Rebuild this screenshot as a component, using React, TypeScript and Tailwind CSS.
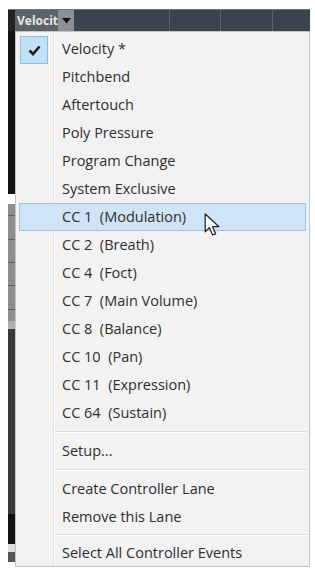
const items = [
   'Velocity *',
   'Pitchbend',
   'Aftertouch',
   'Poly Pressure',
   'Program Change',
   'System Exclusive',
   'CC 1  (Modulation)',
   'CC 2  (Breath)',
   'CC 4  (Foct)',
   'CC 7  (Main Volume)',
   'CC 8  (Balance)',
   'CC 10  (Pan)',
   'CC 11  (Expression)',
   'CC 64  (Sustain)',
]

const Separator = ({ tall }: { tall?: boolean }) => (
   <div className={tall ? 'flex h-[10px] items-center pl-[38px] pr-[2px]' : 'flex h-[8px] items-center pl-[38px] pr-[2px]'}>
      <div className="h-[2px] w-full border-t border-b border-t-[#dcdcdc] border-b-white" />
   </div>
)

const Row = ({ label, checked, active }: { label: string; checked?: boolean; active?: boolean }) => (
   <div
      className={
         active
            ? 'relative mx-[3px] flex h-[28px] items-center border border-[#9cc3e6] bg-[#cfe4f6] pl-[42px]'
            : 'relative mx-[3px] flex h-[28px] items-center border border-transparent pl-[42px]'
      }
   >
      {checked && (
         <div className="absolute left-0 top-0 flex h-[28px] w-[28px] items-center justify-center border border-[#86bde8] bg-[#c3e1f5]">
            <svg width="13" height="11" viewBox="0 0 13 11">
               <path d="M1.5 5.5 L5 9 L11.5 1.5" fill="none" stroke="#1d1d1d" strokeWidth="2.6" />
            </svg>
         </div>
      )}
      <span className="whitespace-pre">{label}</span>
      {active && (
         <svg className="absolute left-[184px] top-[9px]" width="17" height="25" viewBox="0 0 16 24">
            <path
               d="M1 1 L1 18 L5 14 L8 21 L11 20 L8 13 L14 13 Z"
               fill="white"
               stroke="#222"
               strokeWidth="1.2"
               strokeLinejoin="round"
            />
         </svg>
      )}
   </div>
)

export default function App() {
   return (
      <div className="h-[573px] w-[315px] bg-white pl-[8px] pt-[9px] font-['Open_Sans',sans-serif] text-[14.5px] text-[#2e2e2e]">
         {/* lane header */}
         <div className="flex h-[22px] w-[302px] border-t border-[#6a727c] bg-[#3b444e]">
            <div className="flex w-[7px] bg-[#222]" />
            <div className="flex w-[43px] items-center bg-[#5d6168] pl-[2px] text-[12px] font-bold text-[#e8e8e8]">
               Velocit
            </div>
            <div className="flex w-[16px] items-center justify-center bg-[#8d9096]">
               <svg width="9" height="6" viewBox="0 0 9 6">
                  <path d="M0 0 L9 0 L4.5 5.5 Z" fill="#111" />
               </svg>
            </div>
            <div className="w-[96px] border-r border-[#5a636d]" />
            <div className="w-[51px] border-r border-[#5a636d]" />
            <div className="w-[52px] border-r border-[#5a636d]" />
         </div>

         <div className="flex">
            {/* left lane strip */}
            <div className="flex w-[7px] flex-col">
               <div className="h-[163px] bg-[#111]" />
               <div className="h-[10px] bg-white" />
               <div className="flex h-[117px] flex-col justify-around bg-[#8e8e8e]">
                  <div className="h-px bg-[#5c5c5c]" />
                  <div className="h-px bg-[#5c5c5c]" />
                  <div className="h-px bg-[#5c5c5c]" />
                  <div className="h-px bg-[#5c5c5c]" />
                  <div className="h-px bg-[#5c5c5c]" />
               </div>
               <div className="h-[8px] bg-[#b0b0b0]" />
               <div className="h-[185px] bg-[#3a3a3a]" />
               <div className="h-[30px] bg-[#111]" />
               <div className="h-[8px] bg-[#ddd]" />
               <div className="h-[10px] bg-[#555]" />
            </div>

            {/* context menu */}
            <div className="relative h-[536px] w-[295px] border border-[#c4c4c4] bg-[#f2f2f2] pb-[2px] pt-[3px]">
               <div className="absolute bottom-0 left-[37px] top-0 w-[2px] border-l border-r border-l-[#e2e2e2] border-r-white" />
               {items.map((label, i) => (
                  <Row key={label} label={label} checked={i === 0} active={i === 6} />
               ))}
               <Separator tall />
               <Row label="Setup..." />
               <Separator tall />
               <Row label="Create Controller Lane" />
               <Row label="Remove this Lane" />
               <Separator />
               <Row label="Select All Controller Events" />
            </div>
         </div>
      </div>
   )
}
